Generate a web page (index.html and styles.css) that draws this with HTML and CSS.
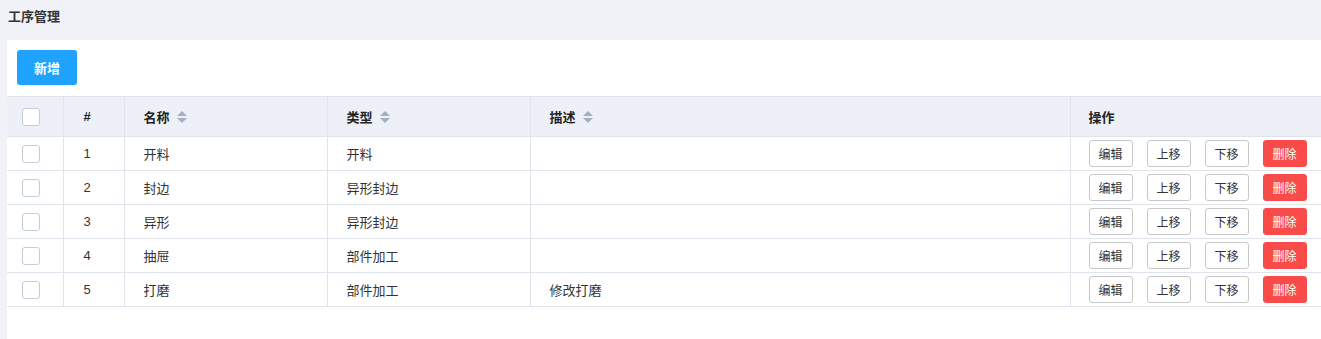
FILE: index.html
```html
<!DOCTYPE html>
<html lang="zh-CN">
<head>
    <meta charset="UTF-8" />
    <meta name="viewport" content="width=device-width, initial-scale=1.0" />
    <title>工序管理</title>
    <link rel="stylesheet" href="styles.css">
</head>
<body>

    <!-- Page title -->
    <div class="page-title">工序管理</div>

    <!-- Main card -->
    <div class="card">
        <div class="toolbar">
            <button class="btn-primary">新增</button>
        </div>

        <table class="grid">
            <colgroup>
                <col class="col-check">
                <col class="col-index">
                <col class="col-name">
                <col class="col-type">
                <col class="col-desc">
                <col>
            </colgroup>
            <thead>
                <tr>
                    <th><span class="checkbox"></span></th>
                    <th>#</th>
                    <th><span class="sortable">名称<span class="sort-icon"><i class="up"></i><i class="down"></i></span></span></th>
                    <th><span class="sortable">类型<span class="sort-icon"><i class="up"></i><i class="down"></i></span></span></th>
                    <th><span class="sortable">描述<span class="sort-icon"><i class="up"></i><i class="down"></i></span></span></th>
                    <th>操作</th>
                </tr>
            </thead>
            <tbody>
                <tr>
                    <td><span class="checkbox"></span></td>
                    <td>1</td>
                    <td>开料</td>
                    <td>开料</td>
                    <td></td>
                    <td class="actions"><button class="btn">编辑</button><button class="btn">上移</button><button class="btn">下移</button><button class="btn btn-danger">删除</button></td>
                </tr>
                <tr>
                    <td><span class="checkbox"></span></td>
                    <td>2</td>
                    <td>封边</td>
                    <td>异形封边</td>
                    <td></td>
                    <td class="actions"><button class="btn">编辑</button><button class="btn">上移</button><button class="btn">下移</button><button class="btn btn-danger">删除</button></td>
                </tr>
                <tr>
                    <td><span class="checkbox"></span></td>
                    <td>3</td>
                    <td>异形</td>
                    <td>异形封边</td>
                    <td></td>
                    <td class="actions"><button class="btn">编辑</button><button class="btn">上移</button><button class="btn">下移</button><button class="btn btn-danger">删除</button></td>
                </tr>
                <tr>
                    <td><span class="checkbox"></span></td>
                    <td>4</td>
                    <td>抽屉</td>
                    <td>部件加工</td>
                    <td></td>
                    <td class="actions"><button class="btn">编辑</button><button class="btn">上移</button><button class="btn">下移</button><button class="btn btn-danger">删除</button></td>
                </tr>
                <tr>
                    <td><span class="checkbox"></span></td>
                    <td>5</td>
                    <td>打磨</td>
                    <td>部件加工</td>
                    <td>修改打磨</td>
                    <td class="actions"><button class="btn">编辑</button><button class="btn">上移</button><button class="btn">下移</button><button class="btn btn-danger">删除</button></td>
                </tr>
            </tbody>
        </table>
    </div>

</body>
</html>
```

FILE: styles.css
```css
* {
    margin: 0;
    padding: 0;
    box-sizing: border-box;
    font-family: "Liberation Sans", "Noto Sans CJK SC", sans-serif;
}
body {
    background: #f0f2f7;
    color: #333;
    font-size: 13px;
    overflow: hidden;
}
.page-title {
    height: 40px;
    padding: 6px 0 0 8px;
    font-size: 13px;
    font-weight: bold;
    color: #333;
}
.card {
    margin-left: 7px;
    height: 299px;
    background: #fff;
}
.toolbar {
    padding: 10px 10px 11px 10px;
}
.btn-primary {
    width: 60px;
    height: 35px;
    border: none;
    border-radius: 3px;
    background: #1fa3ff;
    color: #fff;
    font-size: 13px;
    font-weight: bold;
    cursor: pointer;
}
.grid {
    width: 100%;
    border-collapse: collapse;
    table-layout: fixed;
}
.col-check { width: 56px; }
.col-index { width: 61px; }
.col-name { width: 203px; }
.col-type { width: 203px; }
.col-desc { width: 540px; }
.grid th,
.grid td {
    text-align: left;
    border: 1px solid #dfe4ec;
    padding: 0 19px;
    vertical-align: middle;
}
.grid th:first-child,
.grid td:first-child {
    border-left: none;
    padding-left: 15px;
}
.grid th:last-child,
.grid td:last-child {
    border-right: none;
    padding-left: 18px;
}
.grid th {
    height: 40px;
    background: #edf1f7;
    font-weight: bold;
    color: #222;
}
.grid td {
    height: 34px;
    color: #333;
}
.grid th:nth-child(2),
.grid td:nth-child(2) {
    padding-left: 20px;
}
.checkbox {
    display: block;
    width: 18px;
    height: 18px;
    border: 1px solid #c5ccd8;
    border-radius: 3px;
    background: #fff;
}
.sortable {
    display: inline-flex;
    align-items: center;
}
.sort-icon {
    display: inline-flex;
    flex-direction: column;
    margin-left: 7px;
    gap: 2px;
}
.sort-icon i {
    width: 0;
    height: 0;
    border-left: 5px solid transparent;
    border-right: 5px solid transparent;
}
.sort-icon .up {
    border-bottom: 5px solid #a4b0c2;
}
.sort-icon .down {
    border-top: 5px solid #a4b0c2;
}
.actions {
    white-space: nowrap;
}
.btn {
    width: 44px;
    height: 27px;
    margin-right: 14px;
    border: 1px solid #c8c8c8;
    border-radius: 3px;
    background: #fff;
    color: #333;
    font-size: 12px;
    cursor: pointer;
    vertical-align: middle;
}
.btn-danger {
    margin-right: 0;
    border-color: #fa4b4b;
    background: #fa4b4b;
    color: #fff;
}
```
